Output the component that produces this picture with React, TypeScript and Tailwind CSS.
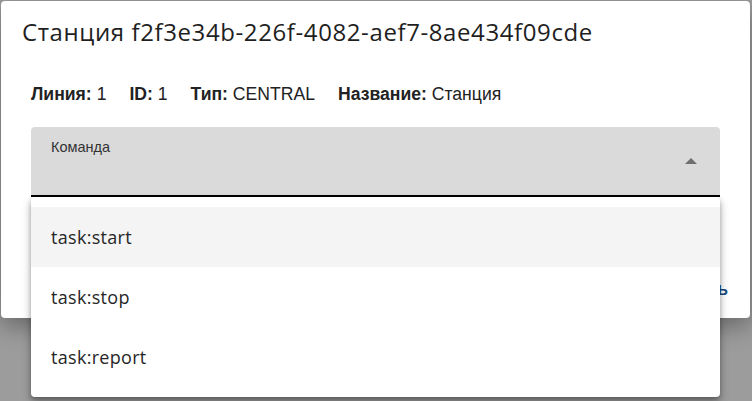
const commands = ['task:start', 'task:stop', 'task:report'];

const info = [
  { label: 'Линия:', value: '1' },
  { label: 'ID:', value: '1' },
  { label: 'Тип:', value: 'CENTRAL' },
  { label: 'Название:', value: 'Станция' },
];

export default function App() {
  return (
    <div className="relative h-[401px] w-[752px] overflow-hidden bg-[#9c9c9c] pl-px pt-px">
      {/* dialog */}
      <div className="flex h-[317px] w-[749px] flex-col rounded bg-white shadow-[0_8px_24px_rgba(0,0,0,0.35)]">
        <h2 className="px-[21px] pt-[15px] font-['Open_Sans',sans-serif] text-[24px] leading-[32px] tracking-[0.6px] text-[#1f1f1f]">
          Станция f2f3e34b-226f-4082-aef7-8ae434f09cde
        </h2>

        <div className="mt-[35px] flex gap-[23px] px-[30px] font-['Liberation_Sans',Arial,sans-serif] text-[17.6px] leading-[22px] text-[#222]">
          {info.map((item) => (
            <span key={item.label}>
              <b className="font-bold">{item.label}</b> {item.value}
            </span>
          ))}
        </div>

        <div className="relative mx-[30px] mt-[22px] h-[70px] rounded-t border-b-2 border-black bg-[#dadada]">
          <span className="absolute left-[20px] top-[11px] font-['Liberation_Sans',Arial,sans-serif] text-[14.5px] leading-[18px] text-[#333]">
            Команда
          </span>
          <svg className="absolute right-[23px] top-[31px]" width="12" height="6" viewBox="0 0 12 6">
            <path d="M0 6 L6 0 L12 6 Z" fill="#6f6f6f" />
          </svg>
        </div>

        <div className="mt-auto flex justify-end pb-[16px] pr-[22px]">
          <button className="font-['Open_Sans',sans-serif] text-[18px] font-semibold text-[#154a80]">Отправить</button>
        </div>
      </div>

      {/* open select menu */}
      <div className="absolute left-[31px] top-[197px] w-[689px] rounded bg-white py-[10px] shadow-[0_5px_10px_rgba(0,0,0,0.3),0_2px_4px_rgba(0,0,0,0.2)]">
        {commands.map((cmd, i) => (
          <div
            key={cmd}
            className={`flex h-[60px] items-center px-[20px] font-['Open_Sans',sans-serif] text-[18px] tracking-[0.3px] text-[#262626] ${i === 0 ? 'bg-[#f4f4f4]' : ''}`}
          >
            {cmd}
          </div>
        ))}
      </div>
    </div>
  );
}
